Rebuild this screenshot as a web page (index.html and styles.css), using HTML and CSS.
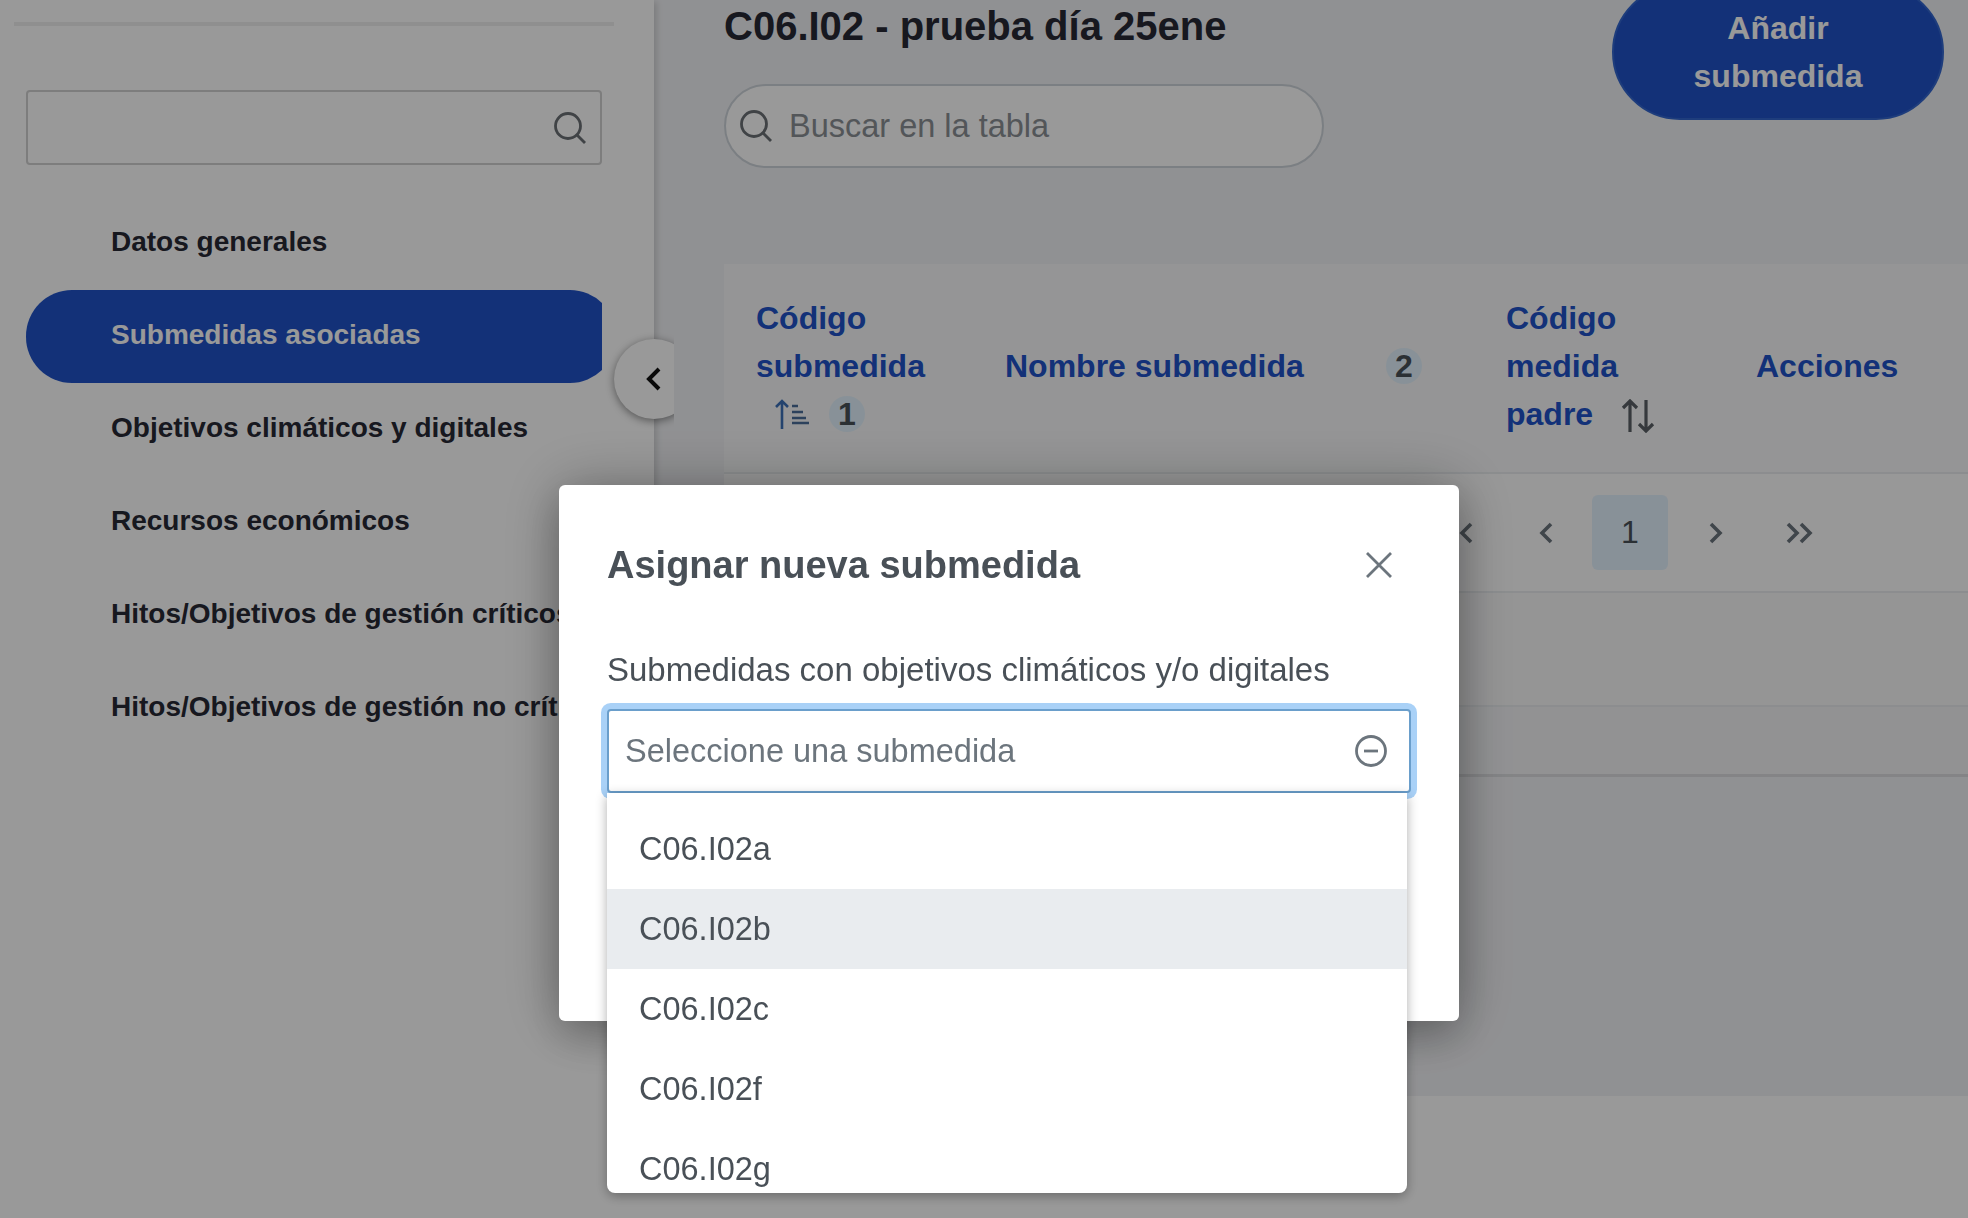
FILE: index.html
```html
<!DOCTYPE html>
<html lang="es">
<head>
<meta charset="utf-8">
<title>Submedidas asociadas</title>
<link rel="stylesheet" href="styles.css">
</head>
<body>
<div class="page">
  <aside class="sidebar">
    <div class="side-rule"></div>
    <div class="side-search">
      <svg class="ico-search" viewBox="0 0 34 34" width="34" height="34"><circle cx="15" cy="15" r="12.5"/><path d="M24 24l8 8"/></svg>
    </div>
    <nav class="side-nav">
      <a class="nav-item">Datos generales</a>
      <a class="nav-item is-active">Submedidas asociadas</a>
      <a class="nav-item">Objetivos climáticos y digitales</a>
      <a class="nav-item">Recursos económicos</a>
      <a class="nav-item">Hitos/Objetivos de gestión críticos</a>
      <a class="nav-item">Hitos/Objetivos de gestión no críticos</a>
    </nav>
    <button class="side-toggle"><svg viewBox="0 0 16 24" width="16" height="24"><path d="M13 2L3 12l10 10"/></svg></button>
  </aside>
  <main class="main">
    <div class="panel">
      <div class="top">
        <div class="top-left">
          <h1 class="title">C06.I02 - prueba día 25ene</h1>
          <div class="table-search">
            <svg class="ico-search" viewBox="0 0 34 34" width="34" height="34"><circle cx="15" cy="15" r="12.5"/><path d="M24 24l8 8"/></svg>
            <span class="placeholder">Buscar en la tabla</span>
          </div>
        </div>
        <button class="add-btn">Añadir submedida</button>
      </div>
      <div class="table">
        <div class="thead">
          <div class="th th-code">Código submedida
            <span class="sort-line"><svg class="sort-asc" viewBox="0 0 34 30" width="34" height="30"><path class="sort-shaft" d="M7 30V2M1 8l6-6 6 6"/><path d="M17 7h6M17 13h11M17 19h14M17 24h17"/></svg><span class="badge">1</span></span>
          </div>
          <div class="th th-name">Nombre submedida</div>
          <div class="th th-badge"><span class="badge">2</span></div>
          <div class="th th-parent">Código<br>medida<br>padre<svg class="sort-both" viewBox="0 0 34 34" width="34" height="34"><path d="M9 33V2M2 9l7-7 7 7M25 1v31M18 25l7 7 7-7"/></svg></div>
          <div class="th th-actions">Acciones</div>
        </div>
        <div class="pager">
          <svg viewBox="0 0 30 22" width="30" height="22"><path d="M12 2L3 11l9 9M26 2l-9 9 9 9"/></svg>
          <svg viewBox="0 0 16 22" width="16" height="22"><path d="M13 2L4 11l9 9"/></svg>
          <span class="page-num">1</span>
          <svg viewBox="0 0 16 22" width="16" height="22"><path d="M3 2l9 9-9 9"/></svg>
          <svg viewBox="0 0 30 22" width="30" height="22"><path d="M4 2l9 9-9 9M17 2l9 9-9 9"/></svg>
        </div>
        <div class="row row-a"></div>
        <div class="row row-b"></div>
      </div>
    </div>
  </main>
</div>
<div class="overlay"></div>
<section class="modal">
  <header class="modal-head">
    <h2 class="modal-title">Asignar nueva submedida</h2>
    <svg class="modal-close" viewBox="0 0 28 28" width="28" height="28"><path d="M2 2l24 24M26 2L2 26"/></svg>
  </header>
  <label class="field-label">Submedidas con objetivos climáticos y/o digitales</label>
  <div class="select">
    <span class="select-ph">Seleccione una submedida</span>
    <svg class="select-clear" viewBox="0 0 32 32" width="32" height="32"><circle cx="16" cy="16" r="14.5"/><path d="M9 16h14"/></svg>
  </div>
  <ul class="dropdown">
    <li class="option">C06.I02a</li>
    <li class="option is-hover">C06.I02b</li>
    <li class="option">C06.I02c</li>
    <li class="option">C06.I02f</li>
    <li class="option">C06.I02g</li>
  </ul>
</section>
</body>
</html>
```
FILE: styles.css
```css
* { box-sizing: border-box; }
html, body { margin: 0; height: 100%; overflow: hidden; }
body { font-family: "Liberation Sans", Arial, sans-serif; background: #fff; color: #495057; }

.page { display: flex; align-items: flex-start; width: 1968px; height: 1218px; }

/* sidebar */
.sidebar { position: relative; flex: 0 0 654px; height: 1096px; padding: 22px 40px 0 14px; background: #fff; box-shadow: 5px 0 6px -2px rgba(0,0,0,.14); clip-path: inset(0 -20px 0 0); z-index: 1; }
.side-rule { height: 4px; width: 600px; background: #eee; }
.side-search { display: flex; align-items: center; justify-content: flex-end; width: 576px; height: 75px; margin: 64px 0 0 12px; padding-right: 13px; border: 2px solid #d0d0d0; border-radius: 4px; }
.ico-search { fill: none; stroke: #6b7075; stroke-width: 2.8; flex: none; }
.side-nav { display: flex; flex-direction: column; width: 576px; margin: 32px 0 0 12px; }
.nav-item { display: flex; align-items: center; height: 93px; padding: 0 0 4px 85px; font-size: 28px; font-weight: 700; color: #272935; white-space: nowrap; }
.nav-item.is-active { margin-right: -14px; background: #2153c9; color: #fff; border-radius: 46px; clip-path: inset(0 14px 0 0); }
.side-toggle { position: absolute; top: 339px; left: 614px; display: flex; align-items: center; justify-content: center; width: 80px; height: 80px; padding: 0; border: 0; border-radius: 50%; background: #fff; box-shadow: 0 2px 8px rgba(0,0,0,.45); }
.side-toggle path { fill: none; stroke: #111; stroke-width: 4; }

/* main */
.main { flex: 1; display: flex; flex-direction: column; }
.panel { height: 1096px; padding-left: 70px; background: #f1f2f5; }
.top { display: flex; justify-content: space-between; align-items: flex-start; height: 264px; padding-right: 24px; }
.title { margin: 0; font-size: 40px; line-height: 52px; font-weight: 700; color: #272935; }
.table-search { display: flex; align-items: center; gap: 16px; width: 600px; height: 84px; margin-top: 32px; padding-left: 13px; border: 2px solid #ced4da; border-radius: 42px; background: #fff; }
.placeholder { font-size: 32.5px; color: #8a8f94; }
.add-btn { width: 332px; height: 136px; margin-top: -16px; padding: 0 60px; border: 2px solid #3366cf; border-radius: 68px; background: #2153c9; color: #fff; font-family: inherit; font-size: 32px; font-weight: 700; line-height: 48px; }

.table { background: #fff; }
.thead { display: flex; align-items: center; height: 210px; padding-left: 32px; padding-bottom: 5px; background: #f8f9fa; border-bottom: 2px solid #e9ecef; font-size: 32px; font-weight: 700; line-height: 48px; color: #2153c9; }
.th { flex: none; }
.th-code { width: 249px; }
.th-name { width: 381px; }
.th-badge { width: 120px; }
.th-parent { width: 250px; }
.th-parent .sort-both { margin-left: 28px; vertical-align: -8px; }
.sort-line { display: flex; align-items: center; gap: 20px; padding-left: 19px; height: 48px; }
.sort-asc { fill: none; stroke: #4a6d99; stroke-width: 2.6; flex: none; }
.sort-shaft { stroke: #3c71b8; }
.sort-both { fill: none; stroke: #5a6066; stroke-width: 3.2; }
.badge { display: inline-flex; align-items: center; justify-content: center; width: 36px; height: 36px; border-radius: 50%; background: #e3f2fd; color: #495057; font-size: 32px; font-weight: 700; }

.pager { display: flex; align-items: center; height: 119px; padding-left: 721px; background: #fdfdfe; border-bottom: 2px solid #e9ecef; }
.pager svg { fill: none; stroke: #6c757d; stroke-width: 3.6; flex: none; }
.pager svg:nth-child(1) { margin-right: 63px; }
.pager svg:nth-child(2) { margin-right: 38px; }
.pager svg:nth-child(4) { margin: 0 60px 0 40px; }
.page-num { display: flex; align-items: center; justify-content: center; width: 76px; height: 75px; border-radius: 6px; background: #e3f2fd; font-size: 32px; color: #495057; }
.row-a { height: 114px; background: #f8f8f9; border-bottom: 2px solid #e9ecef; }
.row-b { height: 70px; background: #f3f4f6; border-bottom: 3px solid #dcdde0; }

/* overlay and dialog */
.overlay { position: fixed; inset: 0; background: rgba(0,0,0,.4); z-index: 5; }
.modal { position: fixed; left: 559px; top: 485px; width: 900px; height: 536px; padding: 0 48px; background: #fff; border-radius: 6px; box-shadow: 0 0 60px rgba(0,0,0,.28), 0 16px 40px rgba(0,0,0,.2); z-index: 6; }
.modal-head { display: flex; align-items: center; justify-content: space-between; height: 160px; padding-right: 18px; }
.modal-title { margin: 0; font-size: 38px; font-weight: 700; color: #495057; }
.modal-close { fill: none; stroke: #6c757d; stroke-width: 2.8; flex: none; }
.field-label { display: block; height: 64px; font-size: 33px; line-height: 50px; color: #495057; }
.select { display: flex; align-items: center; justify-content: space-between; width: 804px; height: 84px; padding: 0 22px 0 16px; border: 2px solid #6a9ecb; border-radius: 4px; background: #fff; box-shadow: 0 0 0 6px #a9d1f7; }
.select-ph { font-size: 32.5px; color: #6c757d; }
.select-clear { fill: none; stroke: #6c757d; stroke-width: 2.8; flex: none; }
.dropdown { position: absolute; left: 48px; top: 308px; width: 800px; height: 400px; margin: 0; padding: 16px 0 0; overflow: hidden; list-style: none; background: #fff; border-radius: 0 0 8px 8px; box-shadow: 0 3px 12px rgba(0,0,0,.32); }
.option { display: flex; align-items: center; flex: none; height: 80px; padding-left: 32px; font-size: 32.5px; color: #495057; }
.option.is-hover { background: #e9ecef; }
```
